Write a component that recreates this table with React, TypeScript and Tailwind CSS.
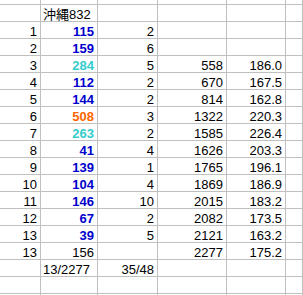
import React from "react";

type Cell = { t?: string; c?: string; b?: boolean; a?: "l" | "r" };

const BLUE = "text-[#0000cc]";
const TEAL = "text-[#33cccc]";
const ORANGE = "text-[#ff6600]";

const rows: Cell[][] = [
  [{}, { t: "沖縄832", a: "l" }, {}, {}, {}, {}],
  [{ t: "1" }, { t: "115", c: BLUE, b: true }, { t: "2" }, {}, {}, {}],
  [{ t: "2" }, { t: "159", c: BLUE, b: true }, { t: "6" }, {}, {}, {}],
  [{ t: "3" }, { t: "284", c: TEAL, b: true }, { t: "5" }, { t: "558" }, { t: "186.0" }, {}],
  [{ t: "4" }, { t: "112", c: BLUE, b: true }, { t: "2" }, { t: "670" }, { t: "167.5" }, {}],
  [{ t: "5" }, { t: "144", c: BLUE, b: true }, { t: "2" }, { t: "814" }, { t: "162.8" }, {}],
  [{ t: "6" }, { t: "508", c: ORANGE, b: true }, { t: "3" }, { t: "1322" }, { t: "220.3" }, {}],
  [{ t: "7" }, { t: "263", c: TEAL, b: true }, { t: "2" }, { t: "1585" }, { t: "226.4" }, {}],
  [{ t: "8" }, { t: "41", c: BLUE, b: true }, { t: "4" }, { t: "1626" }, { t: "203.3" }, {}],
  [{ t: "9" }, { t: "139", c: BLUE, b: true }, { t: "1" }, { t: "1765" }, { t: "196.1" }, {}],
  [{ t: "10" }, { t: "104", c: BLUE, b: true }, { t: "4" }, { t: "1869" }, { t: "186.9" }, {}],
  [{ t: "11" }, { t: "146", c: BLUE, b: true }, { t: "10" }, { t: "2015" }, { t: "183.2" }, {}],
  [{ t: "12" }, { t: "67", c: BLUE, b: true }, { t: "2" }, { t: "2082" }, { t: "173.5" }, {}],
  [{ t: "13" }, { t: "39", c: BLUE, b: true }, { t: "5" }, { t: "2121" }, { t: "163.2" }, {}],
  [{ t: "13" }, { t: "156" }, {}, { t: "2277" }, { t: "175.2" }, {}],
  [{}, { t: "13/2277", a: "l" }, { t: "35/48" }, {}, {}, {}],
  [{}, {}, {}, {}, {}, {}],
  [{}, {}, {}, {}, {}, {}],
];

export default function App() {
  return (
    <div
      className="w-[303px] h-[295px] overflow-hidden bg-white text-[13px] leading-[12px] text-black"
      style={{ fontFamily: '"Liberation Sans", "Noto Sans CJK JP", sans-serif' }}
    >
      <div className="grid grid-cols-[41px_57px_60px_69px_59px_1fr]">
        {Array.from({ length: 6 }).map((_, i) => (
          <div key={`h${i}`} className="h-[5px] border-r border-b border-[#c0c0c0]" />
        ))}
        {rows.map((r, ri) =>
          r.map((c, ci) => (
            <div
              key={`${ri}-${ci}`}
              className={`h-[17px] border-r border-b border-[#c0c0c0] flex items-end overflow-visible whitespace-nowrap ${
                c.a === "l" ? "justify-start pl-[2px]" : "justify-end pr-[3px]"
              } ${c.c ?? ""} ${c.b ? "font-bold" : ""}`}
            >
              {c.t ?? ""}
            </div>
          ))
        )}
      </div>
    </div>
  );
}
